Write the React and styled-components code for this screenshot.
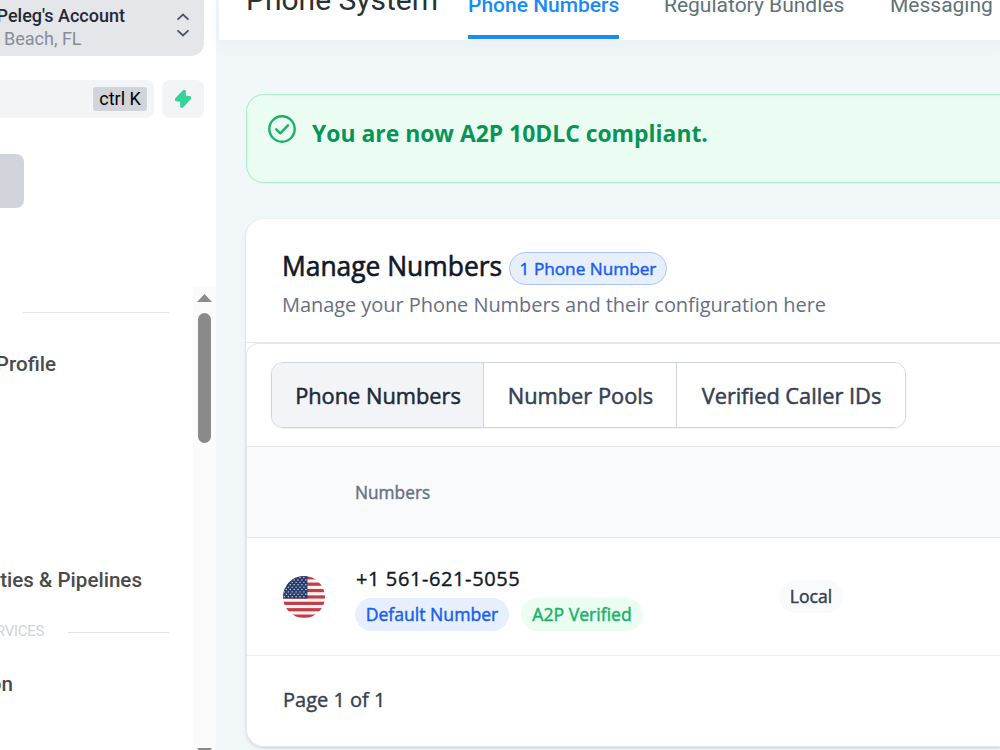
import React from 'react'
import styled, { createGlobalStyle } from 'styled-components'

const GlobalStyle = createGlobalStyle`
  * {
    box-sizing: border-box;
  }

  body {
    margin: 0;
    overflow: hidden;
    background: #f1f6f9;
  }
`

const Page = styled.div`
  display: flex;
  width: 1000px;
  height: 750px;
  overflow: hidden;
  font-family: 'Open Sans', 'Noto Sans', sans-serif;
`

/* sidebar */

const Sidebar = styled.aside`
  display: flex;
  flex-direction: column;
  flex: none;
  width: 216px;
  height: 750px;
  background: #ffffff;
  font-family: Roboto, sans-serif;
`

const AccountCard = styled.div`
  display: flex;
  justify-content: space-between;
  width: 204px;
  height: 56px;
  padding: 5px 14px 0 0;
  border-radius: 0 0 13px 0;
  background: #e5e6ea;
`

const AccountText = styled.div`
  display: flex;
  flex-direction: column;
  width: 125px;
`

const AccountName = styled.div`
  align-self: flex-end;
  color: #1f2937;
  font-size: 18px;
  font-weight: 500;
  line-height: 22px;
  white-space: nowrap;
`

const AccountPlace = styled.div`
  padding-left: 4px;
  color: #868c98;
  font-size: 18px;
  line-height: 24px;
  white-space: nowrap;
`

const Chevrons = styled.svg`
  flex: none;
  margin-top: 8px;
`

const SearchRow = styled.div`
  display: flex;
  gap: 8px;
  margin-top: 24px;
`

const SearchBox = styled.div`
  display: flex;
  align-items: center;
  justify-content: flex-end;
  width: 154px;
  height: 38px;
  padding-right: 7px;
  border-radius: 0 8px 8px 0;
  background: #f3f4f6;
`

const Shortcut = styled.span`
  width: 54px;
  height: 24px;
  border-radius: 3px;
  background: #d1d4db;
  color: #000000;
  font-size: 18px;
  line-height: 24px;
  text-align: center;
`

const BoltButton = styled.div`
  display: flex;
  align-items: center;
  justify-content: center;
  width: 42px;
  height: 38px;
  border-radius: 8px;
  background: #f3f4f6;
`

const ActiveItem = styled.div`
  width: 24px;
  height: 54px;
  margin-top: 36px;
  border-radius: 0 8px 8px 0;
  background: #d1d4db;
`

const NavArea = styled.div`
  display: flex;
  justify-content: space-between;
  height: 464px;
  margin-top: 78px;
`

const NavList = styled.nav`
  width: 193px;
`

const Divider = styled.div`
  width: 146px;
  height: 1px;
  margin: 26px 0 0 23px;
  background: #e3e4e6;
`

const NavItem = styled.div`
  display: flex;
  justify-content: flex-end;
  width: ${props => props.$width}px;
  margin-top: ${props => props.$top}px;
  color: #4a4a4a;
  font-size: 20.6px;
  font-weight: 500;
  line-height: 24px;
  white-space: nowrap;
`

const NavSection = styled.div`
  display: flex;
  align-items: center;
  gap: 24px;
  height: 20px;
  margin-top: 29px;
`

const NavSectionLabel = styled.div`
  display: flex;
  justify-content: flex-end;
  width: 44px;
  color: #cfd3dc;
  font-size: 15px;
  letter-spacing: -0.3px;
`

const NavSectionLine = styled.div`
  width: 101px;
  height: 1px;
  margin-top: 3px;
  background: #dfe1e5;
`

const ScrollTrack = styled.div`
  display: flex;
  flex-direction: column;
  align-items: center;
  justify-content: space-between;
  width: 23px;
  padding-top: 8px;
  background: #fbfbfb;
`

const ScrollThumb = styled.div`
  width: 13px;
  height: 130px;
  margin-top: 11px;
  border-radius: 7px;
  background: #8a8a8a;
`

const ScrollTop = styled.div`
  display: flex;
  flex-direction: column;
  align-items: center;
`

const Arrow = styled.svg`
  display: block;
`

/* main area */

const Main = styled.main`
  flex: 1;
  min-width: 0;
  padding-left: 3px;
`

const TopBar = styled.header`
  display: flex;
  align-items: flex-start;
  height: 40px;
  padding-left: 27px;
  background: #ffffff;
  box-shadow: 0 2px 20px rgba(40, 60, 80, 0.05);
  font-family: Roboto, sans-serif;
  white-space: nowrap;
`

const Title = styled.div`
  flex: none;
  width: 222px;
  margin-top: -16px;
  color: #2a3135;
  font-size: 30px;
  line-height: 32px;
`

const TopTab = styled.div`
  flex: none;
  height: 46px;
  width: ${props => props.$width}px;
  margin: -7px 45px 0 0;
  border-bottom: 4px solid ${props => (props.$active ? '#188bf6' : 'transparent')};
  color: ${props => (props.$active ? '#188bf6' : '#607179')};
  font-size: 21px;
  font-weight: ${props => (props.$active ? 500 : 400)};
  line-height: 24px;
`

const Content = styled.div`
  padding: 54px 0 0 27px;
`

const Alert = styled.div`
  display: flex;
  align-items: flex-start;
  height: 89px;
  padding: 20px 0 0 21px;
  border: 1px solid #a6f4c5;
  border-right: 0;
  border-radius: 18px 0 0 18px;
  background: #ebfdf3;
`

const AlertText = styled.div`
  margin: 1px 0 0 16px;
  color: #079455;
  font-size: 22.9px;
  font-weight: 700;
  line-height: 36px;
  white-space: nowrap;
`

const Card = styled.section`
  height: 528px;
  margin-top: 36px;
  border-radius: 18px 0 0 18px;
  background: #ffffff;
  box-shadow: 0 1px 3px rgba(16, 24, 40, 0.18);
`

const CardHeader = styled.div`
  height: 124px;
  padding: 30px 0 0 36px;
  border-bottom: 1px solid #e4e7ec;
`

const HeadingRow = styled.div`
  display: flex;
  align-items: center;
  height: 38px;
`

/* medium weight: the family has only 400 and 600, a thin stroke fills the gap */
const Heading = styled.h1`
  width: 227px;
  margin: -4px 0 0;
  color: #101828;
  font-size: 26.4px;
  font-weight: 400;
  -webkit-text-stroke: 0.6px #101828;
  line-height: 36px;
  white-space: nowrap;
`

const Subtitle = styled.div`
  color: #667085;
  font-size: 20px;
  letter-spacing: -0.06px;
  line-height: 36px;
`

const Badge = styled.span`
  display: flex;
  align-items: center;
  justify-content: center;
  flex: none;
  width: ${props => props.$width}px;
  height: 33px;
  padding-bottom: ${props => (props.$border ? 0 : 2)}px;
  border: 1px solid ${props => props.$border || 'transparent'};
  border-radius: 17px;
  background: ${props => props.$bg};
  color: ${props => props.$color};
  font-size: ${props => (props.$border ? 17.2 : 17.6)}px;
  -webkit-text-stroke: 0.45px ${props => props.$color};
  white-space: nowrap;
`

const Panel = styled.div`
  height: 404px;
  border: 1px solid #e4e7ec;
  border-right: 0;
  border-radius: 12px 0 0 18px;
`

const TabBar = styled.div`
  display: flex;
  width: 635px;
  height: 66px;
  margin: 18px 0 18px 24px;
  border: 1px solid #d0d5dd;
  border-radius: 12px;
  box-shadow: 0 1px 2px rgba(16, 24, 40, 0.06);
  overflow: hidden;
`

const TabButton = styled.div`
  width: ${props => props.$width}px;
  padding-left: 1px;
  border-left: ${props => (props.$first ? 0 : '1px solid #d0d5dd')};
  background: ${props => (props.$first ? '#f2f4f7' : '#ffffff')};
  color: ${props => (props.$first ? '#1d2939' : '#344054')};
  font-size: 21.8px;
  -webkit-text-stroke: 0.5px ${props => (props.$first ? '#1d2939' : '#344054')};
  line-height: 66px;
  text-align: center;
  white-space: nowrap;
`

const TableHead = styled.div`
  height: 92px;
  padding-left: 108px;
  border-top: 1px solid #e4e7ec;
  border-bottom: 1px solid #e4e7ec;
  background: #f9fafb;
  color: #667085;
  font-size: 17.3px;
  -webkit-text-stroke: 0.4px #667085;
  line-height: 91px;
`

const TableRow = styled.div`
  display: flex;
  height: 118px;
  padding-left: 36px;
  border-bottom: 1px solid #eaecf0;
`

const Flag = styled.svg`
  flex: none;
  margin: 38px 30px 0 0;
`

const NumberCell = styled.div`
  width: 424px;
  padding-top: 26px;
`

const PhoneNumber = styled.div`
  padding-left: 1px;
  color: #101828;
  font-size: 20px;
  letter-spacing: 0.6px;
  -webkit-text-stroke: 0.4px #101828;
  line-height: 30px;
`

const BadgeRow = styled.div`
  display: flex;
  gap: 12px;
  margin-top: 4px;
`

const TypeCell = styled.div`
  padding-top: 42px;
`

const Pagination = styled.div`
  padding-left: 36px;
  color: #344054;
  font-size: 20px;
  -webkit-text-stroke: 0.4px #344054;
  line-height: 88px;
`

const stars = []
for (let row = 0; row < 9; row++) {
  for (let col = 0; col < 7; col++) {
    stars.push({ x: 1.4 + col * 4 + (row % 2) * 2, y: 1.6 + row * 2.45 })
  }
}

const UsFlag = () => (
  <Flag width="42" height="42" viewBox="0 0 43 43">
    <clipPath id="round">
      <circle cx="21.5" cy="21.5" r="21.5" />
    </clipPath>
    <g clipPath="url(#round)">
      <rect width="43" height="43" fill="#fbf3f4" />
      {[0, 2, 4, 6, 8, 10, 12].map(i => (
        <rect key={i} y={0.2 + i * 3.27} width="43" height="3.27" fill="#c23b45" />
      ))}
      <rect width="25" height="23.1" fill="#233a6b" />
      {stars
        .filter(star => star.x < 24.5)
        .map(star => (
          <circle key={`${star.x}-${star.y}`} cx={star.x} cy={star.y} r="0.72" fill="#e6eaf3" />
        ))}
    </g>
  </Flag>
)

const SideNav = () => (
  <Sidebar>
    <AccountCard>
      <AccountText>
        <AccountName>Peleg's Account</AccountName>
        <AccountPlace>Beach, FL</AccountPlace>
      </AccountText>
      <Chevrons width="14" height="24" viewBox="0 0 14 24" fill="none" stroke="#4b5563" strokeWidth="1.8">
        <path d="M1.5 6.7 7 1.5l5.5 5.2M1.5 17.3 7 22.5l5.5-5.2" />
      </Chevrons>
    </AccountCard>
    <SearchRow>
      <SearchBox>
        <Shortcut>ctrl K</Shortcut>
      </SearchBox>
      <BoltButton>
        <svg width="18" height="20" viewBox="0 0 18 20">
          <path
            d="M9.4 1.3 1.4 9.6 1.7 11.8 6.5 12.3 6.9 18.2 8.700 18.300 16.600 9.800 16.300 7.600 11.500 7.200 11.200 1.500z"
            fill="#34d399"
            stroke="#34d399"
            strokeWidth="1"
            strokeLinejoin="round"
          />
        </svg>
      </BoltButton>
    </SearchRow>
    <ActiveItem />
    <NavArea>
      <NavList>
        <Divider />
        <NavItem $width={56} $top={39}>Profile</NavItem>
        <NavItem $width={142} $top={192}>ties &amp; Pipelines</NavItem>
        <NavSection>
          <NavSectionLabel>RVICES</NavSectionLabel>
          <NavSectionLine />
        </NavSection>
        <NavItem $width={13} $top={31}>on</NavItem>
      </NavList>
      <ScrollTrack>
        <ScrollTop>
          <Arrow width="15" height="8" viewBox="0 0 15 8">
            <path d="M0 8 7.500 0 15 8z" fill="#8a8a8a" />
          </Arrow>
          <ScrollThumb />
        </ScrollTop>
        <Arrow width="15" height="2" viewBox="0 0 15 2">
          <path d="M0 0H15L13.200 2H1.800z" fill="#8a8a8a" />
        </Arrow>
      </ScrollTrack>
    </NavArea>
  </Sidebar>
)

const NumbersCard = () => (
  <Card>
    <CardHeader>
      <HeadingRow>
        <Heading>Manage Numbers</Heading>
        <Badge $width={158} $bg="#e8effc" $border="#a9c3fb" $color="#155eef">1 Phone Number</Badge>
      </HeadingRow>
      <Subtitle>Manage your Phone Numbers and their configuration here</Subtitle>
    </CardHeader>
    <Panel>
      <TabBar>
        <TabButton $first $width={211}>Phone Numbers</TabButton>
        <TabButton $width={193}>Number Pools</TabButton>
        <TabButton $width={229}>Verified Caller IDs</TabButton>
      </TabBar>
      <TableHead>Numbers</TableHead>
      <TableRow>
        <UsFlag />
        <NumberCell>
          <PhoneNumber>+1 561-621-5055</PhoneNumber>
          <BadgeRow>
            <Badge $width={154} $bg="#e8effc" $color="#155eef">Default Number</Badge>
            <Badge $width={122} $bg="#ebfdf3" $color="#16b364">A2P Verified</Badge>
          </BadgeRow>
        </NumberCell>
        <TypeCell>
          <Badge $width={64} $bg="#f9fafb" $color="#344054">Local</Badge>
        </TypeCell>
      </TableRow>
      <Pagination>Page 1 of 1</Pagination>
    </Panel>
  </Card>
)

const App = () => (
  <Page>
    <GlobalStyle />
    <SideNav />
    <Main>
      <TopBar>
        <Title>Phone System</Title>
        <TopTab $active $width={151}>Phone Numbers</TopTab>
        <TopTab $width={181}>Regulatory Bundles</TopTab>
        <TopTab $width={110}>Messaging</TopTab>
      </TopBar>
      <Content>
        <Alert>
          <svg width="28" height="28" viewBox="0 0 28 28" fill="none" stroke="#16b364" strokeWidth="2.400" strokeLinecap="round" strokeLinejoin="round">
            <circle cx="14" cy="14" r="12.700" />
            <path d="M8.200 14.300l4 4 7.800-8" />
          </svg>
          <AlertText>You are now A2P 10DLC compliant.</AlertText>
        </Alert>
        <NumbersCard />
      </Content>
    </Main>
  </Page>
)

export default App
